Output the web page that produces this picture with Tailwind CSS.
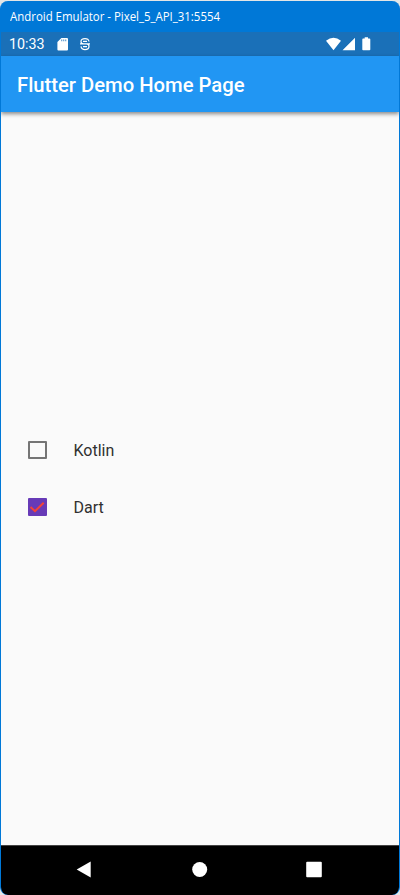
<!DOCTYPE html>
<html lang="en">
<head>
<meta charset="utf-8">
<title>Android Emulator</title>
<script src="https://cdn.jsdelivr.net/npm/@tailwindcss/browser@4"></script>
</head>
<body class="h-[895px] w-[400px] overflow-hidden bg-[#e4e6e6] pt-px font-['Roboto',sans-serif]">
<div class="flex h-[894px] flex-col overflow-hidden rounded-[8px] border-x border-[#0078d7] bg-[#0078d7]">
  <div class="flex h-[31px] shrink-0 items-center pl-[9px] text-white">
    <svg class="block h-[31px] w-[230px]" viewBox="0 0 230 31"><text x="0" y="20" textLength="210" lengthAdjust="spacingAndGlyphs" fill="#fff" font-family="Open Sans, sans-serif" font-size="12">Android Emulator - Pixel_5_API_31:5554</text></svg>
  </div>
  <div class="flex h-6 shrink-0 items-center bg-[#1a70b8] pl-2 text-white">
    <svg class="h-6 w-[390px]" viewBox="9 32 390 24" fill="#fff">
      <text x="9" y="49" textLength="35.5" lengthAdjust="spacingAndGlyphs" font-family="Roboto, sans-serif" font-size="14.5">10:33</text>
      <path fill-rule="evenodd" d="M61.400 38H67q1 0 1 1v10.500q0 1-1 1h-8.600q-1 0-1-1V42zM61.400 39.600v1.600h.8v-1.600zM63.400 39.600v1.600h.8v-1.600zM65.400 39.600v1.600h.8v-1.600z"/>
      <g fill="none" stroke="#fff" stroke-width="1.200"><path d="M89 41.500Q88.500 38.600 85 38.600q-4 0-4 2.900 0 2.300 2.500 2.300h3q2.500 0 2.500 2.500 0 3.300-4 3.300-3.500 0-4-3.300M83 41.400h4M80 43.800h10M83 46.700h4"/></g>
      <path d="M326 40.700Q333.500 34.700 341 40.700L333.500 50.200zM355 37.700V50.200H342.500zM364.700 37.300h3.300v1.300h1.500q.8 0 .8.800v10q0 .8-.8.800h-6.400q-.8 0-.8-.8v-10q0-.8.8-.8h1.600z"/>
    </svg>
  </div>
  <div class="relative flex h-[56px] shrink-0 items-center bg-[#2196f3] pl-4 text-white shadow-[0_2px_4px_rgba(0,0,0,0.45)]">
    <svg class="h-[56px] w-[250px]" viewBox="17 56 250 56" fill="#fff"><text x="17" y="92" textLength="227.500" lengthAdjust="spacingAndGlyphs" font-family="Roboto, sans-serif" font-weight="500" font-size="20">Flutter Demo Home Page</text></svg>
  </div>
  <main class="flex min-h-0 flex-1 flex-col justify-center bg-[#fafafa] text-[16px] text-[#303030]">
    <label class="flex h-[57px] items-center pl-[27px]">
      <span class="size-[18.5px] rounded-[1px] border-2 border-[#757575]"></span>
      <span class="ml-[27px] pt-px">Kotlin</span>
    </label>
    <label class="flex h-[57px] items-center pl-[27px]">
      <span class="flex size-[18.5px] items-center justify-center rounded-[1px] bg-[#673ab7]">
        <svg class="size-[18px]" viewBox="0 0 18 18" fill="none" stroke="#f44336" stroke-width="2"><path d="M2.500 9l4.500 4.200L15.700 4.700"/></svg>
      </span>
      <span class="ml-[27px] pt-px">Dart</span>
    </label>
  </main>
  <nav class="h-[50px] shrink-0 rounded-b-[7px] border-t border-[#444] bg-black">
    <svg class="h-[49px] w-[398px]" viewBox="1 846 398 49" fill="#fff">
      <path d="M90.700 861.500V877.500L76.700 869.500z"/>
      <circle cx="199.700" cy="869.500" r="7.500"/>
      <rect x="306.200" y="861.700" width="15.600" height="15.600" rx="1"/>
    </svg>
  </nav>
</div>
</body>
</html>
